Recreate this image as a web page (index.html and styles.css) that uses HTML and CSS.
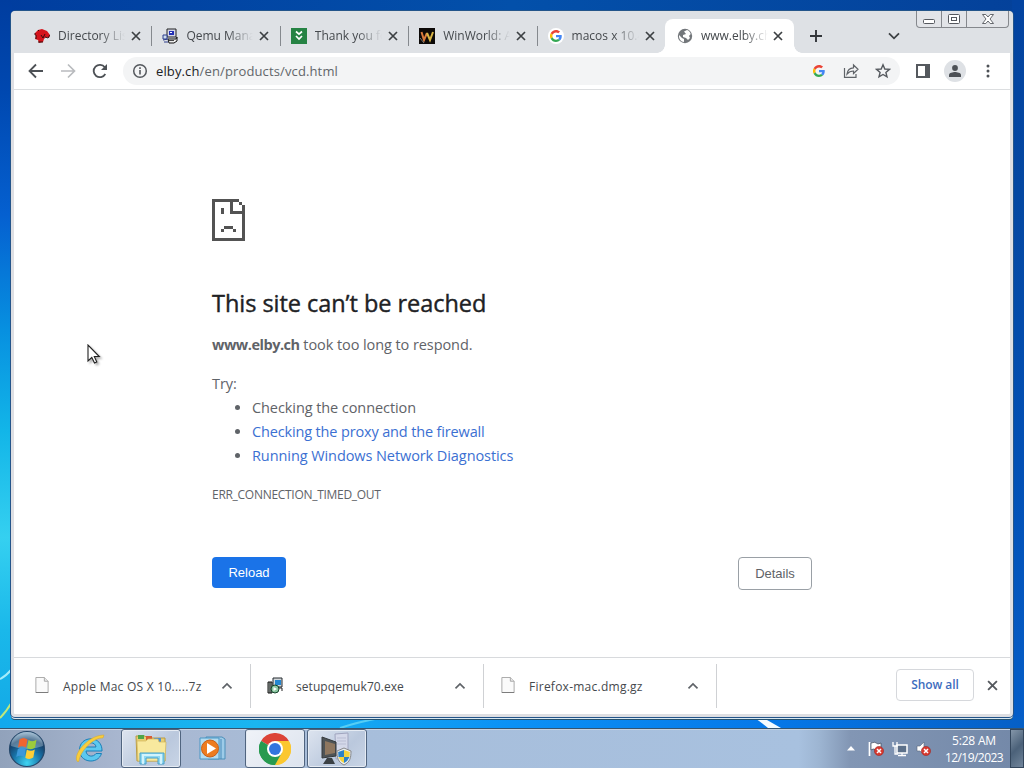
FILE: index.html
```
<!DOCTYPE html>
<html lang="en">
<head>
  <meta charset="utf-8">
  <title>www.elby.ch</title>
  <link rel="stylesheet" href="styles.css">
</head>
<body>

<svg class="defs" width="0" height="0">
  <symbol id="close" viewBox="0 0 10 10"><path d="M1 1l8 8M9 1l-8 8" fill="none" stroke="currentColor" stroke-width="1.7"/></symbol>
  <symbol id="google" viewBox="0 0 48 48">
    <path fill="#ea4335" d="M24 9.5c3.5 0 6.700 1.200 9.200 3.600l6.850-6.850C35.900 2.400 30.500 0 24 0 14.600 0 6.500 5.400 2.600 13.200l8 6.200C12.400 13.700 17.700 9.500 24 9.500z"/>
    <path fill="#4285f4" d="M47 24.500c0-1.600-.15-3.100-.4-4.500H24v9h12.900c-.6 3-2.200 5.500-4.700 7.200l7.700 6C44.400 38 47 32 47 24.500z"/>
    <path fill="#fbbc05" d="M10.500 28.600a14.500 14.500 0 0 1 0-9.200l-8-6.200a24 24 0 0 0 0 21.600z"/>
    <path fill="#34a853" d="M24 48c6.500 0 11.900-2.100 15.900-5.800l-7.700-6c-2.200 1.500-4.900 2.300-8.200 2.300-6.300 0-11.600-4.200-13.500-9.900l-8 6.200C6.500 42.600 14.600 48 24 48z"/>
  </symbol>
  <symbol id="caret" viewBox="0 0 12 8"><path d="M1.500 6.300L6 2l4.500 4.300" fill="none" stroke="#5f6368" stroke-width="1.700"/></symbol>
  <symbol id="file" viewBox="0 0 14 17"><path d="M.5.5h9l4 4v12H.5z" fill="#fafafa" stroke="#a5a5a5"/><path d="M9.500.5v4h4" fill="#e8e8e8" stroke="#a5a5a5"/><path d="M.5 16.500h13" stroke="#777"/></symbol>
  <symbol id="redx" viewBox="0 0 10 10"><circle cx="5" cy="5" r="4.600" fill="#d8392f" stroke="#a02b28" stroke-width=".6"/><path d="M3 3l4 4M7 3L3 7" stroke="#fff" stroke-width="1.500"/></symbol>
</svg>

<div class="desktop">
  <svg class="wallpaper" width="1024" height="768">
    <path d="M0 679Q6 676 12 669" stroke="#a5ecfa" stroke-width="2" fill="none"/>
    <path d="M0 718Q6 712 12 702" stroke="#bfe87c" stroke-width="2" fill="none"/>
    <path d="M340 728Q358 722 380 718" stroke="#55cdf5" stroke-width="2" fill="none"/>
    <path d="M753 717l14 3 14 8h-13q-7-6-15-11z" fill="#f4fbff"/>
  </svg>

  <div class="window">
    <div class="tabstrip">
      <div class="tab">
        <svg class="favicon" viewBox="0 0 16 16"><path d="M1 5l3-3 4-1 5 2 3 4-1 3-3-1-2 2-1 3-4 1-1-3-3-1 1-3-1-1z" fill="#d5131b"/><path d="M0 6h2M1 8h2M1 10h2M4 3l1-1M4 14h5M11 9l3 1 2-3M7 7l2 3 2-4" stroke="#26090a" fill="none" stroke-width=".9"/></svg>
        <span class="title">Directory Listing</span>
        <svg class="x"><use href="#close"/></svg>
      </div>
      <div class="tab">
        <svg class="favicon" viewBox="0 0 16 16"><path d="M5 1h9v8H5z" fill="#d5d7e8" stroke="#222"/><path d="M7 3h5v4H7z" fill="#2330b5"/><path d="M8 4h2v1H8z" fill="#fff"/><path d="M6 11h8l1-2v4l-3 2H7z" fill="#eee" stroke="#111"/><path d="M1 7h4v4H1zM1 12l5-1M2 14h4" fill="#cde" stroke="#2e3f8c"/><path d="M7 12.500h5" stroke="#444"/></svg>
        <span class="title">Qemu Manager</span>
        <svg class="x"><use href="#close"/></svg>
      </div>
      <div class="tab">
        <svg class="favicon" viewBox="0 0 16 16"><path d="M0 0h16v16H0z" fill="#268344"/><path d="M5 3.500l3 2.700 3-2.700M5 8l3 3 3-3" fill="none" stroke="#fff" stroke-width="1.700"/></svg>
        <span class="title">Thank you for</span>
        <svg class="x"><use href="#close"/></svg>
      </div>
      <div class="tab">
        <svg class="favicon" viewBox="0 0 16 16"><path d="M0 0h16v16H0z" fill="#0c0907"/><path d="M2.500 4l2.500 8 3-7" fill="none" stroke="#d87a3c" stroke-width="2"/><path d="M8 5l3 7 3-8" fill="none" stroke="#d8b545" stroke-width="2"/><path d="M1 10l4 5" stroke="#777"/></svg>
        <span class="title">WinWorld: A</span>
        <svg class="x"><use href="#close"/></svg>
      </div>
      <div class="tab">
        <span class="favicon disc"><svg width="12" height="12"><use href="#google"/></svg></span>
        <span class="title">macos x 10.4</span>
        <svg class="x"><use href="#close"/></svg>
      </div>
      <div class="tab active">
        <svg class="favicon" viewBox="0 0 16 16"><circle cx="8" cy="8" r="7.200" fill="#73777b"/><path d="M2 7l3 3 2 1v3c-3 0-5.300-3-5-7zM7 3.500l3-1.500c2 .5 3 2 3.700 4L12 8l1 2-2 2-2-2-3-1V7l3-1z" fill="#fff"/></svg>
        <span class="title">www.elby.ch</span>
        <svg class="x"><use href="#close"/></svg>
      </div>
      <svg class="new-tab" viewBox="0 0 12 12"><path d="M6 0v12M0 6h12" stroke="#33363a" stroke-width="1.900"/></svg>
      <svg class="tab-search" viewBox="0 0 12 8"><path d="M1 1.300l5 5 5-5" fill="none" stroke="#3c4043" stroke-width="1.800"/></svg>
      <div class="caption">
        <span class="cap min"><svg width="12" height="5"><rect x=".5" y=".5" width="11" height="4" rx="1" fill="#fff" stroke="#55585e"/></svg></span>
        <span class="cap max"><svg width="12" height="10"><rect x=".5" y=".5" width="11" height="9" rx="1" fill="#fff" stroke="#55585e"/><rect x="3.500" y="3.500" width="5" height="3" fill="#fff" stroke="#55585e"/></svg></span>
        <span class="cap end"><svg width="12" height="10"><path d="M.5.500h3.300L6 3 8.200.500h3.300L8 5l3.500 4.500H8.200L6 7 3.800 9.500H.5L4 5z" fill="#fff" stroke="#55585e" stroke-width=".9"/></svg></span>
      </div>
    </div>

    <div class="toolbar">
      <svg class="nav" viewBox="0 0 16 16"><path d="M15 8H2M8 1.500L1.500 8 8 14.500" fill="none" stroke="#4d5156" stroke-width="1.800"/></svg>
      <svg class="nav" viewBox="0 0 16 16"><path d="M1 8h13M8 1.500L14.500 8 8 14.500" fill="none" stroke="#b9bbbe" stroke-width="1.700"/></svg>
      <svg class="nav" viewBox="0 0 16 16"><path d="M13.300 11A6.200 6.200 0 1 1 12.800 4.200" fill="none" stroke="#4d5156" stroke-width="1.800"/><path d="M15 1v6H9z" fill="#4d5156"/></svg>
      <div class="omnibox">
        <svg width="16" height="16"><circle cx="8" cy="8" r="6.300" fill="none" stroke="#55595e" stroke-width="1.500"/><path d="M8 7v4.500M8 4.300v1.600" stroke="#55595e" stroke-width="1.600"/></svg>
        <span class="url"><b>elby.ch</b>/en/products/vcd.html</span>
        <div class="actions">
          <svg width="12" height="12"><use href="#google"/></svg>
          <svg width="16" height="16" viewBox="0 0 16 16" fill="none" stroke="#5f6368" stroke-width="1.200"><path d="M1.500 5v9.300h11.500V11"/><path d="M4 11c.5-4 3-6 6.500-6.200V2L15 6.300l-4.500 4.200V8C8 8 5.700 9 4 11z"/></svg>
          <svg width="16" height="16" viewBox="0 0 16 16"><path d="M8 1.800l1.800 4.200 4.600.4-3.500 3 1.100 4.500L8 11.500l-4 2.400 1.100-4.500-3.500-3 4.600-.4z" fill="none" stroke="#55595e" stroke-width="1.400"/></svg>
        </div>
      </div>
      <svg class="panel-icon" width="14" height="14"><rect x="1" y="1" width="12" height="12" fill="#fff" stroke="#55595e" stroke-width="2"/><path d="M9 0h5v14H9z" fill="#55595e"/></svg>
      <span class="avatar"><svg width="14" height="12"><circle cx="7" cy="3" r="2.900" fill="#4d5156"/><path d="M1 12V9.800C1 8 5 7 7 7s6 1 6 2.800V12z" fill="#4d5156"/></svg></span>
      <svg class="menu" width="4" height="14" fill="#4d5156"><circle cx="2" cy="2" r="1.500"/><circle cx="2" cy="7" r="1.500"/><circle cx="2" cy="12" r="1.500"/></svg>
    </div>

    <div class="page">
      <div class="error">
        <svg class="sad" width="33" height="42" viewBox="0 0 11 14" shape-rendering="crispEdges"><path fill="#535353" d="M0 0h9v1H7v3h3V2H9V1h1v1h1v12H0zM1 1v12h9V5H6V1zM3 3h1v2H3zM4 9h3v1H4zM3 10h1v1H3zM7 10h1v1H7z" fill-rule="evenodd"/></svg>
        <h1>This site can’t be reached</h1>
        <p class="summary"><strong>www.elby.ch</strong> took too long to respond.</p>
        <p class="try">Try:</p>
        <ul>
          <li>Checking the connection</li>
          <li><a class="proxy">Checking the proxy and the firewall</a></li>
          <li><a>Running Windows Network Diagnostics</a></li>
        </ul>
        <p class="code">ERR_CONNECTION_TIMED_OUT</p>
        <div class="buttons">
          <button class="reload">Reload</button>
          <button class="details">Details</button>
        </div>
      </div>
    </div>

    <div class="shelf">
      <div class="download">
        <svg class="doc"><use href="#file"/></svg>
        <span class="name">Apple Mac OS X 10.....7z</span>
        <svg class="caret"><use href="#caret"/></svg>
      </div>
      <div class="download">
        <svg class="setup" viewBox="0 0 16 17"><path d="M6 1h9v9H6z" fill="#d3d8dc" stroke="#252a2e"/><path d="M8 3h6v5H8z" fill="#2587d0"/><path d="M1 5h4v11H1z" fill="#a5b0ab" stroke="#111"/><path d="M3 5v11" stroke="#222"/><circle cx="8" cy="12" r="4" fill="#8ac6a0" stroke="#17442c"/><path d="M6.500 10l3.500 2-3.500 2z" fill="#fff"/><path d="M12 11h3v3" stroke="#222" fill="none"/></svg>
        <span class="name exe">setupqemuk70.exe</span>
        <svg class="caret"><use href="#caret"/></svg>
      </div>
      <div class="download">
        <svg class="doc"><use href="#file"/></svg>
        <span class="name">Firefox-mac.dmg.gz</span>
        <svg class="caret"><use href="#caret"/></svg>
      </div>
      <button class="show-all">Show all</button>
      <svg class="shelf-close"><use href="#close"/></svg>
    </div>
  </div>

  <svg class="cursor" width="14" height="22"><path d="M1 1v16l3.800-3.500L7.500 19l2.300-1-2.500-5.500h5z" fill="#fff" stroke="#222" stroke-width="1.100"/></svg>

  <div class="taskbar">
    <svg class="start" viewBox="0 0 38 38">
      <defs>
        <radialGradient id="orb" cx=".5" cy=".9" r=".9"><stop offset="0" stop-color="#3fd4f2"/><stop offset=".45" stop-color="#1873a8"/><stop offset=".75" stop-color="#173f68"/><stop offset="1" stop-color="#9bb9d2"/></radialGradient>
      </defs>
      <circle cx="19" cy="19" r="17.500" fill="url(#orb)" stroke="#25486b" stroke-width="1.200"/>
      <path d="M3 16a16 14 0 0 1 32 0Q19 22 3 16z" fill="#d5e7f1" opacity=".35"/>
      <path d="M11.500 9.500q4-3 8 0l-1.500 8q-4-2.500-8 0z" fill="#ef6530"/>
      <path d="M20.500 10q4 2.500 8-.2l-1.500 8q-4 2.700-8 .2z" fill="#9ccb3c"/>
      <path d="M9.800 19q4-2.500 8 0l-1.500 8q-4-2.500-8 0z" fill="#3c98da"/>
      <path d="M18.800 19.500q4 2.500 8 0l-1.500 8q-4 2.700-8 .2z" fill="#fdce36"/>
    </svg>
    <span class="task ie"><svg width="32" height="32" viewBox="0 0 32 32"><path d="M28 18H12c.5 6 7.500 6.500 10 2.500h5.500C24 32 5 30 5.500 16.500 6 2 28.500 2 28 18zM12 14h10c-.6-5.500-9-5.500-10 0z" fill="#5cc8ef" stroke="#1b7fb8" stroke-width="1"/><path d="M4 29c-7-5 9-27 26-27l-1 3C20 4 6 18 5 28z" fill="#f8cd3c" stroke="#d5a52b" stroke-width=".5"/></svg></span>
    <span class="task open explorer"><svg width="34" height="32" viewBox="0 0 34 32"><path d="M2 3h9l2 2h18v23H3z" fill="#e9cf73" stroke="#b89b45"/><path d="M4 2h6v4H4z" fill="#4fa549"/><path d="M12 3h6v4h-6z" fill="#d75d34"/><path d="M20 5h7v4h-7z" fill="#508fd0"/><path d="M3 8h9l2-2h10l1 3h7l-1 19H4z" fill="#f8e99e" stroke="#d2b75d" stroke-width=".7"/><path d="M6 20h24v11h-6v-6H12v6H6z" fill="#90d8f1" stroke="#469fc8"/><path d="M9 21v10M27 21v10M10 22h16" stroke="#e7fbff" stroke-width="1.500"/></svg></span>
    <span class="task player"><svg width="28" height="26" viewBox="0 0 28 26"><path d="M7 1h16l3 2v20H9z" fill="#9dcbe8" stroke="#4c8fb9"/><path d="M1 2h19v21H1z" fill="#b4dcf1" stroke="#4b97c4"/><path d="M22 3v20" stroke="#4b8bb9"/><circle cx="11" cy="12.500" r="8.500" fill="#ed7c20" stroke="#c95f17"/><path d="M8 7l9 5.500L8 18z" fill="#fff"/></svg></span>
    <span class="task open chrome"><svg width="32" height="32" viewBox="0 0 48 48"><path d="M24 24L3.200 12A24 24 0 0 1 44.800 12z" fill="#dc4337"/><path d="M24 24l20.800-12A24 24 0 0 1 24 48z" fill="#fbc72f"/><path d="M24 24v24A24 24 0 0 1 3.200 12z" fill="#279a50"/><path d="M24 12h20.800A24 24 0 0 1 24 48l10.400-18z" fill="#fbc72f"/><path d="M3.200 12L13.600 30 24 36l10-6-10 18A24 24 0 0 1 3.200 12z" fill="#279a50"/><circle cx="24" cy="24" r="12" fill="#fff"/><circle cx="24" cy="24" r="9" fill="#3275de"/></svg></span>
    <span class="task open setup-task"><svg width="34" height="34" viewBox="0 0 34 34"><path d="M15 2l13-1v25l-12 1z" fill="#d4d8e9" stroke="#a0a5bf"/><path d="M17 6h9M17 9h9M17 12h9" stroke="#b9bdd3"/><path d="M2 5l14 5v14L2 26z" fill="#4e5356" stroke="#35393c"/><path d="M5 9l10 3v9L5 23z" fill="#8e765f"/><path d="M7 26h5l3 6H3z" fill="#3b4145"/><path d="M24 16l7 3c0 7-1 11-7 14-6-3-7-7-7-14z" fill="#e9edf0" stroke="#888"/><path d="M24 18v7h-5.500l-.3-5z" fill="#2c82c7"/><path d="M24 18v7h5.500l.3-5z" fill="#f5d33c"/><path d="M24 25v6q-4-2-5.500-6z" fill="#f5d33c"/><path d="M24 25v6q4-2 5.500-6z" fill="#2c82c7"/></svg></span>
    <div class="tray">
      <svg width="8" height="5"><path d="M0 4.500L4 0l4 4.500z" fill="#fff"/></svg>
      <svg class="flag" width="16" height="16" viewBox="0 0 16 16"><path d="M1.500 1v14" stroke="#fff" stroke-width="1.700"/><path d="M3 2q4-2 7 1l3-1v7H8Q5 7 3 9z" fill="#fff" stroke="#3c4859" stroke-width=".7"/><use href="#redx" x="6" y="5" width="10" height="10"/></svg>
      <svg class="net" width="16" height="16" viewBox="0 0 16 16"><path d="M5 4h10v8H5z" fill="#5c708a" stroke="#fff" stroke-width="1.500"/><path d="M10 12v2M6 14.500h8M1 1v4h4V1M3 5v8h3" fill="none" stroke="#fff" stroke-width="1.300"/></svg>
      <svg class="vol" width="16" height="16" viewBox="0 0 16 16"><path d="M1 5h3l4-4v13l-4-4H1z" fill="#fff" stroke="#58677b" stroke-width=".6"/><use href="#redx" x="5" y="5" width="10" height="10"/></svg>
      <div class="clock"><span>5:28 AM</span><span class="date">12/19/2023</span></div>
      <div class="peek"></div>
    </div>
  </div>
</div>

</body>
</html>
```
FILE: styles.css
```
* {
  box-sizing: border-box;
}
body {
  margin: 0;
  font-family: "Open Sans", "Noto Sans", sans-serif;
}
h1, p, ul {
  margin: 0;
  padding: 0;
}
svg {
  display: block;
  flex: none;
}
.defs {
  position: absolute;
}

.desktop {
  position: relative;
  width: 1024px;
  height: 768px;
  overflow: hidden;
  background:
    linear-gradient(90deg, #12a9ed, #1ab5f0 25%, #0b91f5 50%, #0678e8 75%, #055fc6) 0 717px / 1024px 12px no-repeat,
    linear-gradient(#0343a0, #0548a2 25%, #0350b5 60%, #0660cb) 1012px 0 / 12px 768px no-repeat,
    linear-gradient(#003d9f, #0048b0 12%, #0560d0 28%, #0790e0 43%, #12b5e8 56%, #35d0f0 70%, #1ab8ea 82%, #10a2e5) 0 0 / 12px 768px no-repeat,
    linear-gradient(90deg, #003d9f, #0350aa 50%, #04419a);
}
.wallpaper {
  position: absolute;
}

/* browser window */
.window {
  position: absolute;
  left: 11px;
  top: 11px;
  width: 1002px;
  height: 706px;
  display: flex;
  flex-direction: column;
  border: solid #dedfe3;
  border-width: 0 3px 3px;
  border-radius: 5px 5px 4px 4px;
  background: #fff;
  box-shadow: 0 0 0 1px #24558a, 0 2px 0 #d9e8f1, 0 3px 0 #25516f;
}
.tabstrip {
  display: flex;
  align-items: center;
  height: 42px;
  margin: 0 -3px;
  padding-left: 12px;
  padding-top: 8px;
  border-radius: 4px 4px 0 0;
  background: #dee1e5;
}
.tab {
  position: relative;
  display: flex;
  align-items: center;
  width: 128.400px;
  height: 34px;
  padding-left: 11px;
}
.tab:not(.active):not(:nth-child(5))::after {
  content: "";
  position: absolute;
  right: -1px;
  top: 7px;
  width: 1px;
  height: 20px;
  background: #85898e;
}
.favicon {
  width: 16px;
  height: 16px;
}
.disc {
  display: grid;
  place-items: center;
  border-radius: 50%;
  background: #fff;
}
.title {
  width: 67px;
  margin-left: 8px;
  overflow: hidden;
  white-space: nowrap;
  font-size: 12px;
  line-height: 18px;
  color: #45494d;
  -webkit-mask-image: linear-gradient(90deg, #000 42px, transparent 67px);
  mask-image: linear-gradient(90deg, #000 42px, transparent 67px);
}
.x {
  width: 10px;
  height: 10px;
  margin-left: 6px;
  color: #3c4043;
}
.active {
  width: 129px;
  border-radius: 8px 8px 0 0;
  background: #fff;
}
.active .favicon {
  margin-left: 1px;
}
.active .x {
  margin-left: 5px;
}
.active::before, .active::after {
  content: "";
  position: absolute;
  bottom: 0;
  left: -8px;
  width: 8px;
  height: 8px;
  background: radial-gradient(circle at 0 0, transparent 7.500px, #fff 8px);
}
.active::after {
  left: auto;
  right: -8px;
  background: radial-gradient(circle at 100% 0, transparent 7.500px, #fff 8px);
}
.new-tab {
  width: 12px;
  height: 12px;
  margin-left: 16px;
}
.tab-search {
  width: 12px;
  height: 8px;
  margin-left: 66px;
}
.caption {
  display: flex;
  align-self: flex-start;
  width: 93px;
  height: 17px;
  margin: -8px 4px 0 auto;
  border: 1px solid #85888d;
  border-top: 0;
  border-radius: 0 0 4px 4px;
  background: #e2e4e8;
}
.cap {
  display: flex;
  align-items: center;
  justify-content: center;
  border-right: 1px solid #85888d;
}
.min {
  width: 25px;
  padding-top: 4px;
}
.max {
  width: 25px;
}
.end {
  flex: 1;
  border: 0;
}

.toolbar {
  display: flex;
  align-items: center;
  height: 37px;
  padding: 0 20px 0 14px;
  border-bottom: 1px solid #dcdee0;
}
.nav {
  width: 16px;
  height: 16px;
  margin-right: 16px;
}
.omnibox {
  display: flex;
  align-items: center;
  width: 779px;
  height: 28px;
  margin-left: -1px;
  padding: 0 9px;
  border-radius: 14px;
  background: #f3f4f5;
}
.url {
  margin-left: 8px;
  font-size: 13px;
  letter-spacing: .13px;
  color: #62666a;
}
.url b {
  font-weight: 400;
  color: #202124;
}
.actions {
  display: flex;
  align-items: center;
  gap: 16px;
  margin-left: auto;
}
.actions svg:first-child {
  margin-right: 2px;
}
.panel-icon {
  margin-left: 16px;
}
.avatar {
  display: grid;
  place-items: center;
  width: 22px;
  height: 22px;
  margin-left: 14px;
  border-radius: 50%;
  background: #dee1e5;
}
.menu {
  margin-left: 20px;
}

/* error page */
.page {
  flex: 1;
}
.error {
  width: 600px;
  margin: 109px 0 0 198px;
  font-size: 14.500px;
  line-height: 24px;
  letter-spacing: -.08px;
  color: #5f6368;
}
h1 {
  margin-top: 48px;
  font-size: 23.500px;
  font-weight: 500;
  line-height: 29px;
  letter-spacing: -.04px;
  color: #202124;
  -webkit-text-stroke: .4px #202124;
}
.summary {
  margin-top: 15px;
}
.summary strong {
  letter-spacing: -.48px;
}
.try {
  margin-top: 15px;
}
ul {
  padding-left: 40px;
}
a {
  color: #3b70d2;
}
.proxy {
  letter-spacing: -.15px;
}
.code {
  margin-top: 15px;
  font-size: 12px;
  letter-spacing: -.29px;
}
.buttons {
  display: flex;
  justify-content: space-between;
  align-items: flex-start;
  margin-top: 50px;
}
button {
  padding: 0;
  font: 13px "Liberation Sans", Arial, sans-serif;
}
.reload {
  width: 74px;
  height: 31px;
  border: 0;
  border-radius: 4px;
  background: #1a73e8;
  color: #fff;
}
.details {
  width: 74px;
  height: 33px;
  border: 1px solid #9aa0a6;
  border-radius: 4px;
  background: #fff;
  color: #5f6368;
}

/* downloads */
.shelf {
  display: flex;
  align-items: center;
  height: 57px;
  border-top: 1px solid #d8dadd;
}
.download {
  display: flex;
  align-items: center;
  width: 233px;
  height: 44px;
  padding: 0 17px 0 17px;
  border-right: 1px solid #cfd1d4;
}
.download:first-child {
  width: 237px;
  padding-left: 21px;
}
.doc {
  width: 14px;
  height: 16px;
  margin-bottom: 2px;
}
.setup {
  width: 16px;
  height: 17px;
  margin: 0 -1px 2px -1px;
}
.name {
  margin-left: 14px;
  font-size: 12px;
  letter-spacing: .25px;
  color: #45494d;
}
.exe {
  letter-spacing: .06px;
}
.caret {
  width: 12px;
  height: 8px;
  margin-left: auto;
}
.show-all {
  width: 78px;
  height: 32px;
  margin: 0 13px 3px auto;
  border: 1px solid #d6d8dc;
  border-radius: 4px;
  background: #fff;
  font: 600 12px "Open Sans", sans-serif;
  letter-spacing: -.1px;
  color: #3e6dbe;
}
.shelf-close {
  width: 11px;
  height: 11px;
  margin: 0 12px 2px 0;
  color: #55595e;
}

.cursor {
  position: absolute;
  left: 87px;
  top: 344px;
  filter: drop-shadow(2px 2px 1px rgba(0, 0, 0, .3));
}

/* taskbar */
.taskbar {
  position: absolute;
  left: 0;
  right: 0;
  bottom: 0;
  display: flex;
  align-items: center;
  height: 40px;
  padding-left: 8px;
  border-top: 1px solid #35546f;
  background: linear-gradient(90deg, #91a2bb, #a9b7d0 12%, #a7bedb 35%, #a8c1df 78%, #9db5d2 80%, #8296b4 83%, #7388a8);
  box-shadow: inset 0 1px #c4d2e3;
}
.start {
  width: 38px;
  height: 38px;
}
.task {
  display: grid;
  place-items: center;
  width: 60px;
  height: 39px;
}
.open {
  border: 1px solid #50647f;
  border-radius: 3px;
  background: linear-gradient(135deg, #dde4ef, #bac8dd 60%, #c9d5e6);
  box-shadow: inset 0 0 0 1px #e5ebf3;
}
.ie {
  width: 75px;
  padding-left: 13px;
}
.player {
  width: 64px;
}
.setup-task {
  margin-left: 2px;
}
.chrome {
  background: linear-gradient(135deg, #f0f3f8, #dce3ee);
}
.tray {
  display: flex;
  align-items: center;
  height: 39px;
  margin-left: auto;
}
.flag {
  margin-left: 13px;
}
.net {
  margin-left: 8px;
}
.vol {
  margin-left: 8px;
}
.clock {
  display: flex;
  flex-direction: column;
  align-items: center;
  width: 72px;
  margin-left: 6px;
  font-size: 12px;
  line-height: 17px;
  letter-spacing: -.2px;
  color: #fff;
}
.date {
  letter-spacing: -.55px;
}
.peek {
  width: 14px;
  height: 39px;
  border: 1px solid #33465c;
  background: linear-gradient(135deg, #8496a9, #4b6179 50%, #71859b);
}
```
